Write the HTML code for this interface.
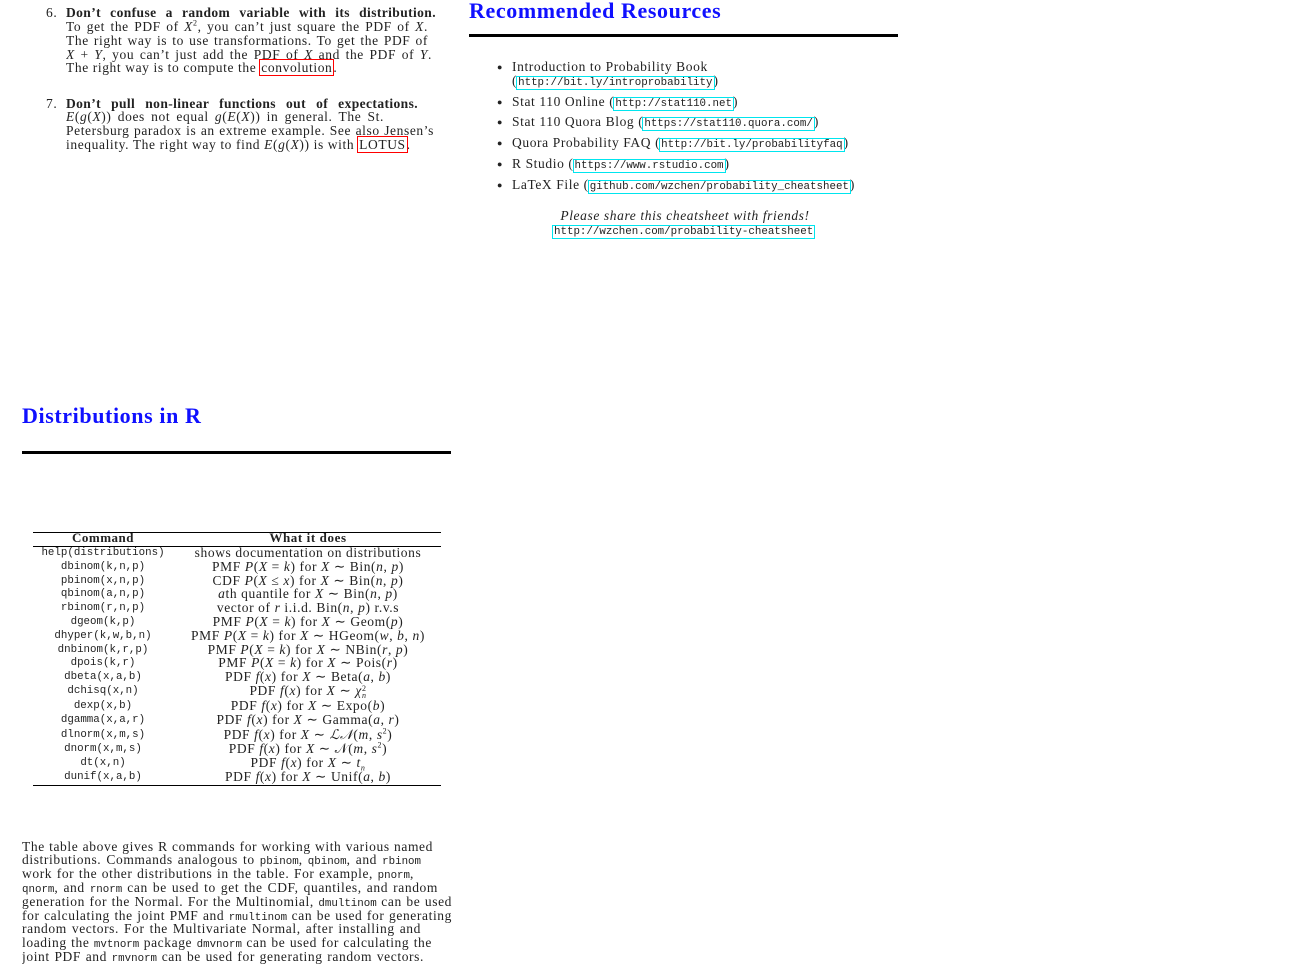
<!DOCTYPE html>
<html><head><meta charset="utf-8"><style>
body{margin:0;width:1307px;height:973px;background:#fff;position:relative;overflow:hidden;font-family:"Liberation Serif",serif;font-size:13.5px;letter-spacing:0.6px;color:#222;}
.l{position:absolute;white-space:nowrap;line-height:14px;height:14px;}
.j{text-align:justify;text-align-last:justify;white-space:normal;overflow:hidden}
.m{font-family:"Liberation Mono",monospace;font-size:10.8px;letter-spacing:0}
i{font-style:italic}
.h{position:absolute;color:#1010ff;font-weight:bold;font-size:22px;white-space:nowrap;letter-spacing:0.6px}
.rule{position:absolute;background:#000;height:3px}
.thin{position:absolute;background:#000;height:1px}
.rb{outline:1.5px solid #ff0000;padding:0 1px}
.cb{outline:1.5px solid #00e5ee;padding:0 1px}
.c1{position:absolute;left:33px;width:140px;text-align:center;line-height:14px;font-family:"Liberation Mono",monospace;font-size:10.8px;letter-spacing:0;white-space:nowrap}
.c2{position:absolute;left:175px;width:266px;text-align:center;line-height:14px;white-space:nowrap}
.b{position:absolute;left:497px;font-size:9px;line-height:14px}
</style></head><body>

<div class="l" style="left:46px;top:6px">6.</div>
<div class="l j" style="left:66px;top:6px;width:370px;font-weight:bold;letter-spacing:0.4px">Don’t confuse a random variable with its distribution.</div>
<div class="l j" style="left:66px;top:20px;width:362px">To get the PDF of <i>X</i><sup style="font-size:8px;line-height:0">2</sup>, you can’t just square the PDF of <i>X</i>.</div>
<div class="l j" style="left:66px;top:34px;width:362px">The right way is to use transformations. To get the PDF of</div>
<div class="l j" style="left:66px;top:48px;width:366px"><i>X</i> + <i>Y</i>, you can’t just add the PDF of <i>X</i> and the PDF of <i>Y</i>.</div>
<div class="l" style="left:66px;top:61px">The right way is to compute the <span class="rb">convolution</span>.</div>

<div class="l" style="left:46px;top:97px">7.</div>
<div class="l j" style="left:66px;top:97px;width:352px;font-weight:bold;letter-spacing:0.4px">Don’t pull non-linear functions out of expectations.</div>
<div class="l j" style="left:66px;top:110px;width:318px"><i>E</i>(<i>g</i>(<i>X</i>)) does not equal <i>g</i>(<i>E</i>(<i>X</i>)) in general. The St.</div>
<div class="l j" style="left:66px;top:124px;width:368px">Petersburg paradox is an extreme example. See also Jensen’s</div>
<div class="l" style="left:66px;top:138px">inequality. The right way to find <i>E</i>(<i>g</i>(<i>X</i>)) is with <span class="rb">LOTUS</span>.</div>

<div class="h" style="left:469px;top:-2px">Recommended Resources</div>
<div class="rule" style="left:469px;top:34px;width:429px"></div>

<div class="b" style="top:60px">●</div>
<div class="l" style="left:512px;top:60px">Introduction to Probability Book</div>
<div class="l" style="left:512px;top:74px">(<span class="m cb">http://bit.ly/introprobability</span>)</div>
<div class="b" style="top:95px">●</div>
<div class="l" style="left:512px;top:95px">Stat 110 Online (<span class="m cb">http://stat110.net</span>)</div>
<div class="b" style="top:115px">●</div>
<div class="l" style="left:512px;top:115px">Stat 110 Quora Blog (<span class="m cb">https://stat110.quora.com/</span>)</div>
<div class="b" style="top:136px">●</div>
<div class="l" style="left:512px;top:136px">Quora Probability FAQ (<span class="m cb">http://bit.ly/probabilityfaq</span>)</div>
<div class="b" style="top:157px">●</div>
<div class="l" style="left:512px;top:157px">R Studio (<span class="m cb">https://www.rstudio.com</span>)</div>
<div class="b" style="top:178px">●</div>
<div class="l" style="left:512px;top:178px">LaTeX File (<span class="m cb">github.com/wzchen/probability_cheatsheet</span>)</div>
<div class="l" style="left:540px;top:209px;width:290px;text-align:center"><i>Please share this cheatsheet with friends!</i></div>
<div class="l" style="left:553px;top:223px"><span class="m cb">http://wzchen.com/probability-cheatsheet</span></div>

<div class="h" style="left:22px;top:403px">Distributions in R</div>
<div class="rule" style="left:22px;top:451px;width:429px"></div>

<div class="thin" style="left:33px;top:532px;width:408px"></div>
<div class="c1" style="top:531px;font-family:'Liberation Serif',serif;font-weight:bold;font-size:13px;letter-spacing:0.5px">Command</div>
<div class="c2" style="top:531px;font-weight:bold;font-size:13px">What it does</div>
<div class="thin" style="left:33px;top:546px;width:408px"></div>

<div class="c1" style="top:546px">help(distributions)</div><div class="c2" style="top:546px">shows documentation on distributions</div>
<div class="c1" style="top:560px">dbinom(k,n,p)</div><div class="c2" style="top:560px">PMF <i>P</i>(<i>X</i> = <i>k</i>) for <i>X</i> ∼ Bin(<i>n</i>, <i>p</i>)</div>
<div class="c1" style="top:574px">pbinom(x,n,p)</div><div class="c2" style="top:574px">CDF <i>P</i>(<i>X</i> ≤ <i>x</i>) for <i>X</i> ∼ Bin(<i>n</i>, <i>p</i>)</div>
<div class="c1" style="top:587px">qbinom(a,n,p)</div><div class="c2" style="top:587px"><i>a</i>th quantile for <i>X</i> ∼ Bin(<i>n</i>, <i>p</i>)</div>
<div class="c1" style="top:601px">rbinom(r,n,p)</div><div class="c2" style="top:601px">vector of <i>r</i> i.i.d. Bin(<i>n</i>, <i>p</i>) r.v.s</div>
<div class="c1" style="top:615px">dgeom(k,p)</div><div class="c2" style="top:615px">PMF <i>P</i>(<i>X</i> = <i>k</i>) for <i>X</i> ∼ Geom(<i>p</i>)</div>
<div class="c1" style="top:629px">dhyper(k,w,b,n)</div><div class="c2" style="top:629px">PMF <i>P</i>(<i>X</i> = <i>k</i>) for <i>X</i> ∼ HGeom(<i>w</i>, <i>b</i>, <i>n</i>)</div>
<div class="c1" style="top:643px">dnbinom(k,r,p)</div><div class="c2" style="top:643px">PMF <i>P</i>(<i>X</i> = <i>k</i>) for <i>X</i> ∼ NBin(<i>r</i>, <i>p</i>)</div>
<div class="c1" style="top:656px">dpois(k,r)</div><div class="c2" style="top:656px">PMF <i>P</i>(<i>X</i> = <i>k</i>) for <i>X</i> ∼ Pois(<i>r</i>)</div>
<div class="c1" style="top:670px">dbeta(x,a,b)</div><div class="c2" style="top:670px">PDF <i>f</i>(<i>x</i>) for <i>X</i> ∼ Beta(<i>a</i>, <i>b</i>)</div>
<div class="c1" style="top:684px">dchisq(x,n)</div><div class="c2" style="top:684px">PDF <i>f</i>(<i>x</i>) for <i>X</i> ∼ <i>χ</i><span style="font-size:8px;display:inline-block;line-height:7px;vertical-align:-3px">2<br><i>n</i></span></div>
<div class="c1" style="top:699px">dexp(x,b)</div><div class="c2" style="top:699px">PDF <i>f</i>(<i>x</i>) for <i>X</i> ∼ Expo(<i>b</i>)</div>
<div class="c1" style="top:713px">dgamma(x,a,r)</div><div class="c2" style="top:713px">PDF <i>f</i>(<i>x</i>) for <i>X</i> ∼ Gamma(<i>a</i>, <i>r</i>)</div>
<div class="c1" style="top:728px">dlnorm(x,m,s)</div><div class="c2" style="top:728px">PDF <i>f</i>(<i>x</i>) for <i>X</i> ∼ <i>ℒ𝒩</i>(<i>m</i>, <i>s</i><sup style="font-size:8px;line-height:0">2</sup>)</div>
<div class="c1" style="top:742px">dnorm(x,m,s)</div><div class="c2" style="top:742px">PDF <i>f</i>(<i>x</i>) for <i>X</i> ∼ 𝒩(<i>m</i>, <i>s</i><sup style="font-size:8px;line-height:0">2</sup>)</div>
<div class="c1" style="top:756px">dt(x,n)</div><div class="c2" style="top:756px">PDF <i>f</i>(<i>x</i>) for <i>X</i> ∼ <i>t<sub style="font-size:8px;line-height:0">n</sub></i></div>
<div class="c1" style="top:770px">dunif(x,a,b)</div><div class="c2" style="top:770px">PDF <i>f</i>(<i>x</i>) for <i>X</i> ∼ Unif(<i>a</i>, <i>b</i>)</div>
<div class="thin" style="left:33px;top:785px;width:408px"></div>

<div class="l j" style="left:22px;top:840px;width:411px">The table above gives R commands for working with various named</div>
<div class="l j" style="left:22px;top:853px;width:399px">distributions. Commands analogous to <span class="m">pbinom</span>, <span class="m">qbinom</span>, and <span class="m">rbinom</span></div>
<div class="l j" style="left:22px;top:867px;width:392px">work for the other distributions in the table. For example, <span class="m">pnorm</span>,</div>
<div class="l j" style="left:22px;top:881px;width:416px"><span class="m">qnorm</span>, and <span class="m">rnorm</span> can be used to get the CDF, quantiles, and random</div>
<div class="l j" style="left:22px;top:895px;width:430px">generation for the Normal. For the Multinomial, <span class="m">dmultinom</span> can be used</div>
<div class="l j" style="left:22px;top:909px;width:430px">for calculating the joint PMF and <span class="m">rmultinom</span> can be used for generating</div>
<div class="l j" style="left:22px;top:922px;width:399px">random vectors. For the Multivariate Normal, after installing and</div>
<div class="l j" style="left:22px;top:936px;width:410px">loading the <span class="m">mvtnorm</span> package <span class="m">dmvnorm</span> can be used for calculating the</div>
<div class="l j" style="left:22px;top:950px;width:402px">joint PDF and <span class="m">rmvnorm</span> can be used for generating random vectors.</div>
</body></html>
